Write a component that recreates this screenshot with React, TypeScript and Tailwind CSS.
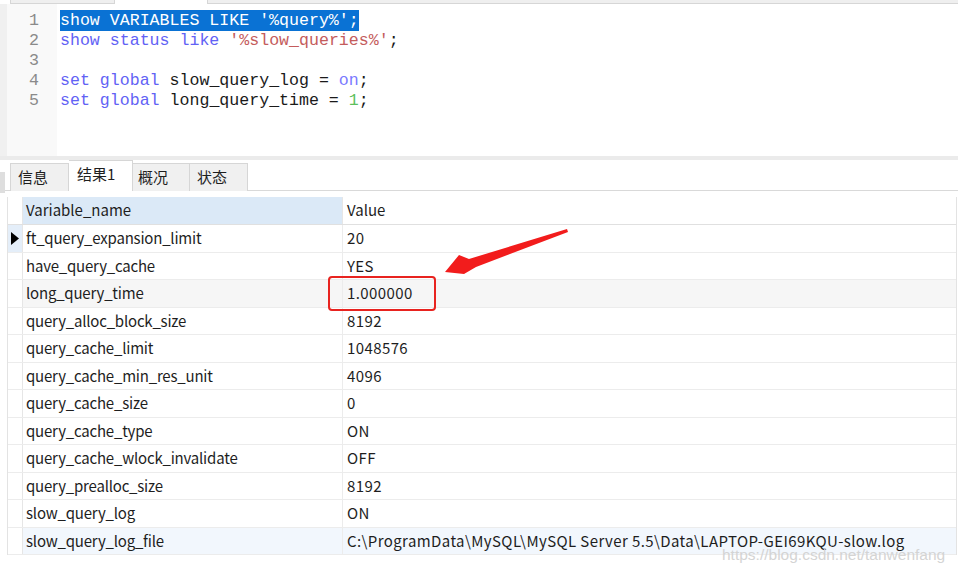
import React from "react";

const rows: [string, string][] = [
  ["ft_query_expansion_limit", "20"],
  ["have_query_cache", "YES"],
  ["long_query_time", "1.000000"],
  ["query_alloc_block_size", "8192"],
  ["query_cache_limit", "1048576"],
  ["query_cache_min_res_unit", "4096"],
  ["query_cache_size", "0"],
  ["query_cache_type", "ON"],
  ["query_cache_wlock_invalidate", "OFF"],
  ["query_prealloc_size", "8192"],
  ["slow_query_log", "ON"],
  ["slow_query_log_file", "C:\\ProgramData\\MySQL\\MySQL Server 5.5\\Data\\LAPTOP-GEI69KQU-slow.log"],
];

const KW = "text-[#6262f5]";

export default function App() {
  return (
    <div
      className="relative flex h-[573px] w-[958px] flex-col overflow-hidden bg-white text-[#1e1e1e]"
      style={{ fontFamily: '"Noto Sans CJK SC", "Noto Sans", sans-serif' }}
    >
      {/* top tab remnants */}
      <div className="flex h-[4px] shrink-0">
        <div className="w-[10px] bg-white" />
        <div className="w-[105px] border-b border-l border-r border-[#d6d6d6] bg-[#efefef]" />
        <div className="w-[92px] bg-white" />
        <div className="flex-1 border-b border-l border-[#d6d6d6] bg-[#efefef]" />
      </div>

      {/* editor */}
      <div className="flex h-[152px] shrink-0">
        <div className="w-[7px] bg-[#f0f0f0]" />
        <div
          className="w-[50px] bg-[#f9f9f9] pt-[7px] text-right text-[16.6px] leading-[20px] text-[#8a8a8a]"
          style={{ fontFamily: '"Liberation Mono", monospace' }}
        >
          {[1, 2, 3, 4, 5].map((n) => (
            <div key={n} className="pr-[18px]">
              {n}
            </div>
          ))}
        </div>
        <div
          className="flex-1 pl-[3px] pt-[7px] text-[16.6px] leading-[20px] whitespace-pre text-[#1a1a1a]"
          style={{ fontFamily: '"Liberation Mono", monospace' }}
        >
          <div>
            <span className="bg-[#0a72d4] pb-[1px] pt-[1px] text-white">show VARIABLES LIKE '%query%';</span>
          </div>
          <div>
            <span className={KW}>show status like </span>
            <span className="text-[#c45c5c]">'%slow_queries%'</span>
            <span>;</span>
          </div>
          <div>&nbsp;</div>
          <div>
            <span className={KW}>set global </span>
            <span>slow_query_log = </span>
            <span className="text-[#7a7aff]">on</span>
            <span>;</span>
          </div>
          <div>
            <span className={KW}>set global </span>
            <span>long_query_time = </span>
            <span className="text-[#5cbf5c]">1</span>
            <span>;</span>
          </div>
        </div>
      </div>

      {/* separator */}
      <div className="h-[4px] shrink-0 bg-[#ebebeb]" />

      {/* tabs */}
      <div className="relative flex h-[31px] shrink-0 items-end border-b border-[#d9d9d9] pl-[10px] text-[15px]">
        <div className="absolute bottom-[-3px] left-0 h-[21px] w-[5px] bg-[#dedede]" />
        <div className="mb-[-1px] flex h-[28px] w-[59px] items-center border border-b-0 border-[#d6d6d6] bg-[#f0f0f0] pl-[7px]">
          信息
        </div>
        <div className="mb-[-1px] flex h-[31px] w-[64px] items-center border-r border-t border-[#d6d6d6] bg-white pb-[3px] pl-[8px]">
          结果1
        </div>
        <div className="mb-[-1px] flex h-[28px] w-[57px] items-center border-r border-t border-[#d6d6d6] bg-[#f0f0f0] pl-[5px]">
          概况
        </div>
        <div className="mb-[-1px] flex h-[28px] w-[58px] items-center border-r border-t border-[#d6d6d6] bg-[#f0f0f0] pl-[7px]">
          状态
        </div>
      </div>

      {/* grid */}
      <div className="shrink-0 pl-[7px] pt-[6px] text-[15px]">
        <div className="w-[950px] border-l border-r border-[#e3e3e3]">
          <div className="flex h-[28px] border-b border-[#e0e0e0]">
            <div className="w-[15px] border-r border-[#e6e6e6]" />
            <div className="flex w-[320px] items-center border-r border-[#e6e6e6] bg-[#dbe9f7] pl-[3px]">
              Variable_name
            </div>
            <div className="flex flex-1 items-center pl-[4px]">Value</div>
          </div>
          {rows.map(([k, v], i) => (
            <div
              key={k}
              className={`flex h-[27.5px] border-b border-[#ececec] ${
                i === 2 ? "bg-[#f6f6f6]" : i === 11 ? "bg-[#f2f7fd]" : "bg-white"
              }`}
            >
              <div
                className={`flex w-[15px] items-center justify-center border-r border-[#e6e6e6] ${
                  i === 0 ? "bg-[#e4eef9]" : "bg-white"
                }`}
              >
                {i === 0 && (
                  <svg width="8" height="13" viewBox="0 0 8 13">
                    <path d="M0 0 L8 6.5 L0 13 Z" fill="#000" />
                  </svg>
                )}
              </div>
              <div className="flex w-[320px] items-center border-r border-[#ececec] pl-[3px] tracking-[-0.2px]">
                {k}
              </div>
              <div className="flex flex-1 items-center whitespace-nowrap pl-[4px] tracking-[0.4px]">{v}</div>
            </div>
          ))}
        </div>
      </div>

      {/* red highlight box */}
      <div className="absolute left-[328px] top-[276px] h-[35px] w-[108px] rounded-[4px] border-[2.5px] border-[#e8231f]" />

      {/* arrow */}
      <svg className="absolute left-0 top-0" width="958" height="573" viewBox="0 0 958 573">
        <polygon
          points="445,272 459,255 469,259 567,229 568,232 476,267 464,274"
          fill="#f21c1c"
        />
      </svg>

      {/* watermark */}
      <div
        className="absolute left-[722px] top-[546px] text-[15.5px] leading-[18px] text-[#d4d4d4]"
        style={{ fontFamily: '"Liberation Sans", Arial, sans-serif' }}
      >
        https://blog.csdn.net/tanwenfang
      </div>
    </div>
  );
}
